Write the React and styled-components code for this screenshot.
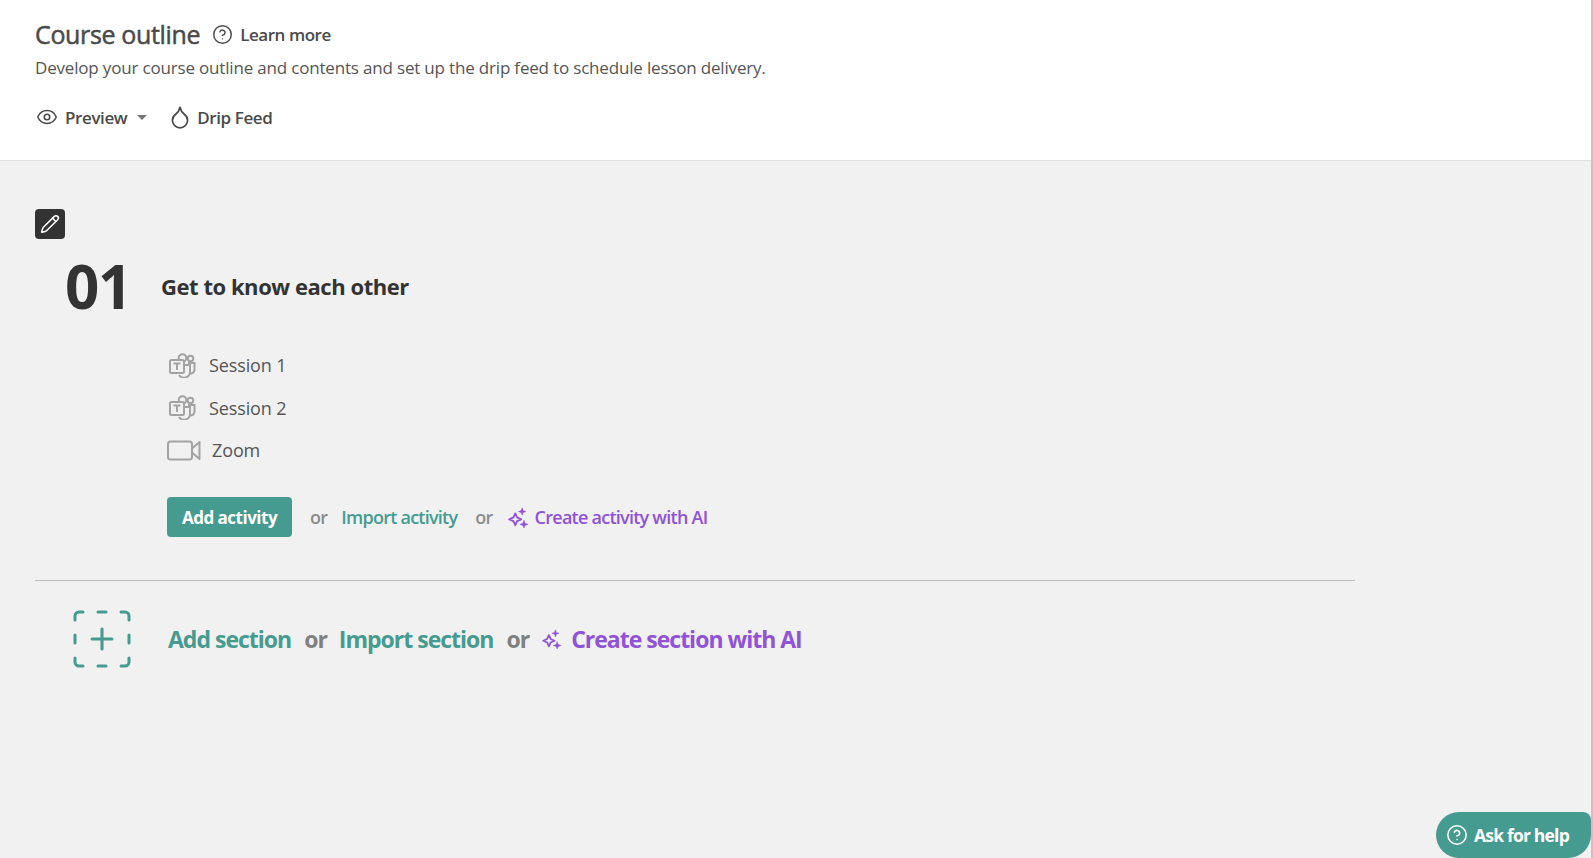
import React from 'react';
import styled, { createGlobalStyle } from 'styled-components';
import { Eye, Droplet, CircleHelp, Pencil, Plus } from 'lucide-react';

const GlobalStyle = createGlobalStyle`
  html, body {
    margin: 0;
    padding: 0;
    height: 100%;
    overflow: hidden;
    background: #f1f1f1;
    font-family: "Open Sans", "Noto Sans", "Liberation Sans", sans-serif;
  }
  #root {
    height: 100%;
  }
`;

const Page = styled.div`
  height: 858px;
  display: flex;
  flex-direction: column;
  border-right: 2px solid #c4c4c4;
  box-sizing: border-box;
`;

const Header = styled.header`
  height: 161px;
  box-sizing: border-box;
  background: #fff;
  border-bottom: 1px solid #e0e0e0;
  padding: 17px 35px 0;
`;

const TitleRow = styled.div`
  display: flex;
  align-items: center;
  height: 34px;
`;

const Title = styled.h1`
  margin: 0;
  font-size: 25px;
  font-weight: 400;
  letter-spacing: -0.35px;
  color: #4a4a4a;
  -webkit-text-stroke: 0.5px #4a4a4a;
`;

const LearnMore = styled.a`
  display: flex;
  align-items: center;
  gap: 7px;
  margin-left: 12px;
  font-size: 17px;
  font-weight: 600;
  letter-spacing: -0.45px;
  color: #4a4a4a;
`;

const Description = styled.p`
  margin: 6px 0 0;
  font-size: 17px;
  line-height: 22px;
  letter-spacing: -0.18px;
  color: #555;
`;

const Toolbar = styled.div`
  display: flex;
  align-items: center;
  margin-top: 25px;
  height: 26px;
`;

const ToolButton = styled.button`
  display: flex;
  align-items: center;
  gap: ${(p) => p.$gap}px;
  margin-left: ${(p) => p.$offset || 0}px;
  padding: 0;
  border: 0;
  background: none;
  font: inherit;
  font-size: 17px;
  font-weight: 600;
  letter-spacing: -0.4px;
  color: #4a4a4a;
`;

const Caret = styled.span`
  width: 0;
  height: 0;
  margin: 0 20px 0 10px;
  border-left: 5.5px solid transparent;
  border-right: 5.5px solid transparent;
  border-top: 5.5px solid #777;
`;

const Main = styled.main`
  flex: 1;
  position: relative;
  padding: 48px 35px 0;
`;

const EditButton = styled.div`
  width: 30px;
  height: 30px;
  border-radius: 4px;
  background: #333;
  color: #fff;
  display: flex;
  align-items: center;
  justify-content: center;
`;

const SectionHead = styled.div`
  display: flex;
  align-items: center;
  height: 94px;
  margin-left: 30px;
`;

const SectionNumber = styled.div`
  width: 96px;
  font-size: 60px;
  font-weight: 700;
  letter-spacing: -1.2px;
  color: #333;
`;

const SectionName = styled.h2`
  margin: 0;
  font-size: 22px;
  font-weight: 700;
  letter-spacing: -0.45px;
  color: #333;
`;

const ActivityList = styled.div`
  margin: 11px 0 0 132px;
  display: flex;
  flex-direction: column;
`;

const Activity = styled.div`
  display: flex;
  align-items: center;
  height: 42.5px;
  font-size: 18px;
  letter-spacing: -0.12px;
  color: #555;
`;

const ActivityIcon = styled.span`
  display: flex;
  justify-content: flex-start;
  width: ${(p) => (p.$wide ? 45 : 42)}px;
  padding-left: ${(p) => (p.$wide ? 0 : 2)}px;
  box-sizing: border-box;
`;

const ActivityActions = styled.div`
  display: flex;
  align-items: center;
  margin: 25px 0 0 132px;
  font-size: 18px;
  font-weight: 600;
  letter-spacing: -0.75px;
`;

const PrimaryButton = styled.button`
  width: 125px;
  height: 40px;
  padding: 1px 0 0;
  border: 0;
  border-radius: 4px;
  background: #469b90;
  color: #fff;
  font: inherit;
  font-size: 17px;
  font-weight: 700;
  letter-spacing: -0.5px;
`;

const Or = styled.span`
  color: ${(p) => p.$color || '#8c8c8c'};
  margin: 0 ${(p) => p.$right}px 0 ${(p) => p.$left}px;
`;

const TealLink = styled.a`
  color: #469b90;
`;

const AiLink = styled.a`
  display: flex;
  align-items: center;
  gap: ${(p) => p.$gap}px;
  color: #8f52d8;
`;

const Divider = styled.hr`
  width: 1320px;
  margin: 43px 0 0;
  border: 0;
  border-top: 1px solid #bdbdbd;
`;

const AddRow = styled.div`
  display: flex;
  align-items: center;
  margin: 29px 0 0 38px;
  font-size: 23px;
  font-weight: 700;
  letter-spacing: -1px;
`;

const AddIcon = styled.div`
  position: relative;
  width: 58px;
  height: 58px;
  margin-right: 37px;
  color: #469b90;
  display: flex;
  align-items: center;
  justify-content: center;

  svg.frame {
    position: absolute;
    inset: 0;
  }
`;

const HelpButton = styled.button`
  position: absolute;
  right: 0;
  bottom: 0;
  width: 155px;
  height: 46px;
  display: flex;
  align-items: center;
  gap: 6px;
  padding: 0 0 0 10px;
  border: 0;
  border-radius: 23px 8px 23px 23px;
  background: #469b90;
  color: #fff;
  font: inherit;
  font-size: 17.5px;
  font-weight: 700;
  letter-spacing: -0.8px;
`;

const Sparkle = ({ size }) => (
  <svg width={size} height={size} viewBox="0 0 24 24" fill="none" stroke="currentColor" strokeWidth="2" strokeLinejoin="round">
    <path d="M9 8 11 12.5l4.5 2L11 16.5 9 21l-2-4.500-4.500-2 4.500-2z" />
    <path d="M16.500 2 17.600 5l3 1.100-3 1.100-1.100 3-1.100-3-3-1.100 3-1.100z" fill="currentColor" strokeWidth="0.5" />
    <path d="M18.500 15.500 19.700 18.800l3.300 1.200-3.300 1.200-1.200 2.800-1.200-2.800-3.300-1.200 3.300-1.200z" fill="currentColor" strokeWidth="0.5" />
  </svg>
);

const TeamsIcon = () => (
  <svg width="27" height="25" viewBox="0 0 27 25" fill="none" stroke="#a3a3a3" strokeWidth="2">
    <circle cx="13.500" cy="5" r="3.800" />
    <circle cx="21.500" cy="5.500" r="2.800" />
    <path d="M10 12h11v7a6 6 0 0 1-11 3" />
    <path d="M19 10h6.500v6.500a4 4 0 0 1-4.500 4" />
    <rect x="1" y="7" width="14" height="13" rx="1.500" fill="#f1f1f1" />
    <path d="M4.500 10.500h7M8 10.500v6.500" />
  </svg>
);

const ZoomIcon = () => (
  <svg width="34" height="21" viewBox="0 0 34 21" fill="none" stroke="#a3a3a3" strokeWidth="2" strokeLinejoin="round">
    <rect x="1" y="1.500" width="24" height="18" rx="2.500" />
    <path d="M25 8.500 32.500 2v17L25 12.500" />
  </svg>
);

const AddFrame = () => (
  <svg className="frame" width="58" height="58" viewBox="0 0 58 58" fill="none" stroke="currentColor" strokeWidth="3" strokeLinecap="round">
    <path d="M2 10V6a4 4 0 0 1 4-4h4" />
    <path d="M48 2h4a4 4 0 0 1 4 4v4" />
    <path d="M2 48v4a4 4 0 0 0 4 4h4" />
    <path d="M48 56h4a4 4 0 0 0 4-4v-4" />
    <path d="M25 2h8M25 56h8M2 25v8M56 25v8" />
  </svg>
);

const App = () => {
  return (
    <Page>
      <GlobalStyle />
      <Header>
        <TitleRow>
          <Title>Course outline</Title>
          <LearnMore>
            <CircleHelp size={21} strokeWidth={1.7} />
            Learn more
          </LearnMore>
        </TitleRow>
        <Description>Develop your course outline and contents and set up the drip feed to schedule lesson delivery.</Description>
        <Toolbar>
          <ToolButton $offset={1} $gap={7}>
            <Eye size={22} strokeWidth={1.7} />
            Preview
          </ToolButton>
          <Caret />
          <ToolButton $gap={4}>
            <Droplet size={26} strokeWidth={1.6} />
            Drip Feed
          </ToolButton>
        </Toolbar>
      </Header>
      <Main>
        <EditButton>
          <Pencil size={20} strokeWidth={1.8} />
        </EditButton>
        <SectionHead>
          <SectionNumber>01</SectionNumber>
          <SectionName>Get to know each other</SectionName>
        </SectionHead>
        <ActivityList>
          <Activity>
            <ActivityIcon><TeamsIcon /></ActivityIcon>
            Session 1
          </Activity>
          <Activity>
            <ActivityIcon><TeamsIcon /></ActivityIcon>
            Session 2
          </Activity>
          <Activity>
            <ActivityIcon $wide><ZoomIcon /></ActivityIcon>
            Zoom
          </Activity>
        </ActivityList>
        <ActivityActions>
          <PrimaryButton>Add activity</PrimaryButton>
          <Or $left={18} $right={14}>or</Or>
          <TealLink>Import activity</TealLink>
          <Or $left={18} $right={14}>or</Or>
          <AiLink $gap={6}>
            <Sparkle size={22} />
            Create activity with AI
          </AiLink>
        </ActivityActions>
        <Divider />
        <AddRow>
          <AddIcon>
            <AddFrame />
            <Plus size={34} strokeWidth={2.2} />
          </AddIcon>
          <TealLink>Add section</TealLink>
          <Or $left={13} $right={12} $color="#808080">or</Or>
          <TealLink>Import section</TealLink>
          <Or $left={13} $right={12} $color="#808080">or</Or>
          <AiLink $gap={9}>
            <Sparkle size={21} />
            Create section with AI
          </AiLink>
        </AddRow>
        <HelpButton>
          <CircleHelp size={22} strokeWidth={1.7} />
          Ask for help
        </HelpButton>
      </Main>
    </Page>
  );
};

export default App;
